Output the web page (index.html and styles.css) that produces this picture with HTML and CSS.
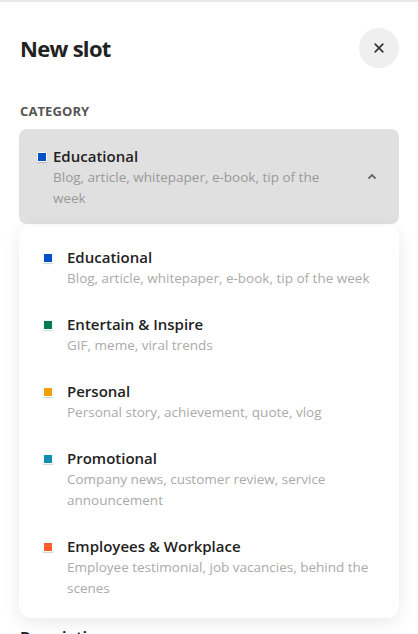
FILE: index.html
```html
<!DOCTYPE html>
<html lang="en">
<head>
<meta charset="utf-8">
<title>New slot</title>
<link rel="stylesheet" href="styles.css">
</head>
<body>
<div class="modal">
  <header class="header">
    <h1 class="title">New slot</h1>
    <button class="close" aria-label="Close">
      <svg width="12" height="12" viewBox="0 0 12 12"><path d="M2.2 2.2L9.8 9.8M9.8 2.2L2.2 9.8" stroke="#333" stroke-width="1.7" stroke-linecap="round"/></svg>
    </button>
  </header>

  <div class="label">CATEGORY</div>

  <div class="select">
    <span class="marker blue"></span>
    <div class="select-text">
      <div class="opt-title">Educational</div>
      <div class="opt-sub">Blog, article, whitepaper, e-book, tip of the week</div>
    </div>
    <svg class="chevron" width="10" height="7" viewBox="0 0 10 7"><path d="M1.5 5.5L5 2L8.5 5.5" fill="none" stroke="#666" stroke-width="1.8"/></svg>
  </div>

  <ul class="menu">
    <li class="item">
      <span class="marker blue"></span>
      <div class="item-text">
        <div class="opt-title">Educational</div>
        <div class="opt-sub">Blog, article, whitepaper, e-book, tip of the week</div>
      </div>
    </li>
    <li class="item">
      <span class="marker green"></span>
      <div class="item-text">
        <div class="opt-title">Entertain &amp; Inspire</div>
        <div class="opt-sub">GIF, meme, viral trends</div>
      </div>
    </li>
    <li class="item">
      <span class="marker orange"></span>
      <div class="item-text">
        <div class="opt-title">Personal</div>
        <div class="opt-sub">Personal story, achievement, quote, vlog</div>
      </div>
    </li>
    <li class="item">
      <span class="marker teal"></span>
      <div class="item-text">
        <div class="opt-title">Promotional</div>
        <div class="opt-sub">Company news, customer review, service announcement</div>
      </div>
    </li>
    <li class="item">
      <span class="marker red"></span>
      <div class="item-text">
        <div class="opt-title">Employees &amp; Workplace</div>
        <div class="opt-sub">Employee testimonial, job vacancies, behind the scenes</div>
      </div>
    </li>
  </ul>

  <div class="desc-label">Description</div>
</div>
</body>
</html>
```

FILE: styles.css
```css
* { box-sizing: border-box; }
html, body {
  margin: 0;
  padding: 0;
  background: #fff;
}
body {
  font-family: "Open Sans", "Noto Sans", sans-serif;
  color: #222;
  overflow: hidden;
  height: 634px;
}
.modal {
  border-top: 2px solid #e8e8e8;
  padding: 0 19px;
}
.header {
  display: flex;
  align-items: center;
  justify-content: space-between;
  padding-top: 26px;
}
.title {
  margin: 0;
  font-size: 22px;
  font-weight: 700;
  line-height: 40px;
  padding-left: 1px;
  color: #222;
  letter-spacing: -0.7px;
}
.close {
  width: 40px;
  height: 40px;
  border-radius: 50%;
  border: none;
  background: #efefef;
  display: flex;
  align-items: center;
  justify-content: center;
  padding: 0;
}
.label {
  margin-top: 34px;
  padding-left: 1px;
  font-size: 13px;
  font-weight: 700;
  line-height: 18px;
  color: #555;
  letter-spacing: 0.1px;
}
.select {
  margin-top: 9px;
  background: #e0e0e0;
  border-radius: 8px;
  display: flex;
  align-items: flex-start;
  padding: 17px 18px 15px 18px;
}
.select .marker {
  margin-top: 6px;
  margin-right: 6px;
}
.select-text {
  flex: 1;
  padding-right: 30px;
}
.select .opt-sub {
  color: #9a9a9a;
}
.chevron {
  align-self: center;
  margin-right: 4px;
  margin-top: -2px;
}
.marker {
  flex: none;
  width: 10px;
  height: 10px;
  border: 1px solid #fff;
  box-shadow: 0 1px 1px rgba(0, 0, 0, 0.15);
}
.blue { background: #0050c8; }
.green { background: #007a55; }
.orange { background: #f59f00; }
.teal { background: #118fb0; }
.red { background: #ff5c2a; }
.opt-title {
  font-size: 15px;
  font-weight: 600;
  line-height: 21px;
  color: #222;
}
.opt-sub {
  font-size: 13.5px;
  line-height: 21px;
  color: #aaa;
}
.menu {
  list-style: none;
  margin: 2px 0 0;
  padding: 9px 0 6px;
  background: #fff;
  border-radius: 12px;
  box-shadow: 0 4px 18px rgba(0, 0, 0, 0.09);
}
.item {
  display: flex;
  align-items: flex-start;
  padding: 12px 24px 13px 24px;
}
.item .marker {
  margin-top: 6px;
  margin-right: 14px;
}
.item-text {
  flex: 1;
}
.desc-label {
  margin-top: 8px;
  padding-left: 1px;
  font-size: 15px;
  font-weight: 700;
  line-height: 21px;
  color: #222;
}
```
